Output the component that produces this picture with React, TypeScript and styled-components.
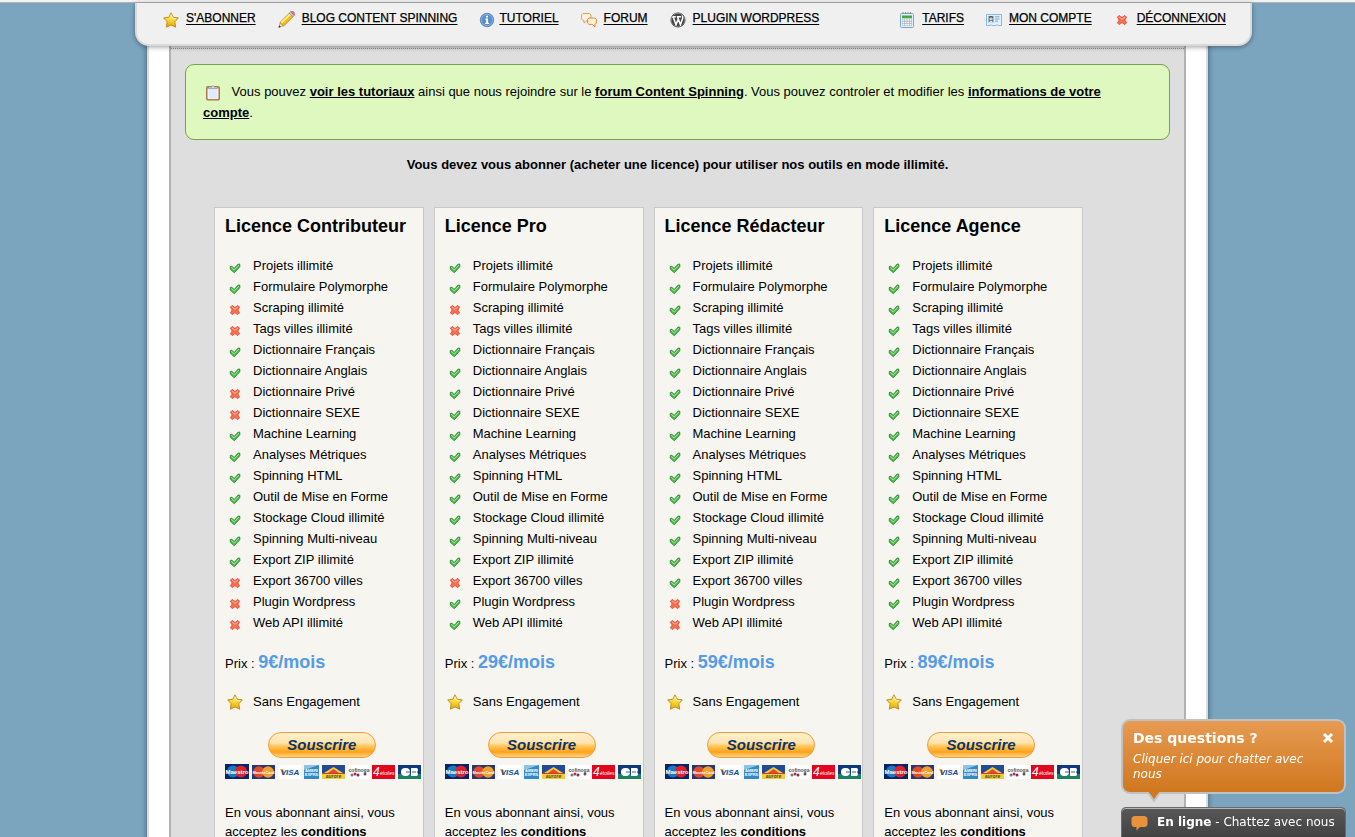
import React from "react";
import styled, { createGlobalStyle, css } from "styled-components";

const GlobalStyle = createGlobalStyle`
  *, *::before, *::after { box-sizing: border-box; }
  body {
    margin: 0;
    background: #7ba5bf;
    color: #000;
    font: 13px/21px "Liberation Sans", Arial, sans-serif;
  }
  p, h1, h2, ul { margin: 0; padding: 0; }
  a { color: inherit; }
`;

const Screen = styled.div`
  display: flex;
  flex-direction: column;
  height: 100vh;
  overflow: hidden;
`;

const TopStrip = styled.div`
  flex: none;
  height: 3px;
  background: #f2f2f2;
  border-bottom: 1px solid #b4b4b4;
`;

const Column = styled.div`
  display: flex;
  flex-direction: column;
  flex: 1;
  width: 100%;
  max-width: 1061px;
  margin: 0 auto;
`;

const Header = styled.header`
  position: relative;
  z-index: 1;
  flex: none;
  display: flex;
  justify-content: space-between;
  height: 43px;
  margin: 0 -44px 0 -12px;
  padding: 6px 24px 0 26px;
  background: #f0f0f0;
  border: 2px solid #dadada;
  border-top: 0;
  border-radius: 0 0 14px 14px;
  box-shadow: 0 1px 5px rgba(0, 0, 0, 0.4);
`;

const Nav = styled.nav`
  display: flex;
  align-items: flex-start;
  gap: 22px;
`;

const NavLink = styled.a<{ $tight?: boolean }>`
  display: flex;
  align-items: center;
  gap: ${(p) => (p.$tight ? "4px" : "7px")};
  height: 21px;
  font-size: 12px;
  text-decoration: none;
  white-space: nowrap;
  span {
    margin-bottom: 2px;
    text-decoration: underline;
    text-underline-offset: 2px;
    -webkit-text-stroke: 0.25px #000;
  }
`;

const Sheet = styled.div`
  display: flex;
  flex: 1;
  min-height: 0;
  margin-top: -14px;
  padding: 0 20px;
  background: #fff;
  border: solid #d9dcde;
  border-width: 0 2px;
  box-shadow: 0 0 6px rgba(0, 0, 0, 0.45);
`;

const Content = styled.main`
  flex: 1;
  min-width: 0;
  padding-top: 16px;
  background: #dedede;
  border: solid #b2b2b2;
  border-width: 0 2px;
`;

const Divider = styled.div`
  border-top: 1px dotted #8c8c8c;
`;

const Notice = styled.p`
  margin: 15px 14px 0;
  padding: 16px 40px 16px 17px;
  background: #dff8c0;
  border: 1px solid #76a34c;
  border-radius: 9px;
  svg { margin: 0 7px 0 2px; vertical-align: -5px; }
  a { font-weight: bold; }
`;

const Lead = styled.h1`
  margin: 14px 0 32px;
  font-size: 13px;
  line-height: 21px;
  text-align: center;
`;

const Plans = styled.div`
  display: grid;
  grid-template-columns: repeat(4, minmax(0, 1fr));
  gap: 10px;
  padding: 0 101px 0 43px;
`;

const Card = styled.section`
  padding: 8px 4px 40px 10px;
  background: #f6f5f0;
  border: 1px solid #c8c8c8;
`;

const CardTitle = styled.h2`
  margin-bottom: 18px;
  font-size: 18px;
  line-height: 21px;
  white-space: nowrap;
`;

const Features = styled.ul`
  list-style: none;
`;

const rowStyle = css`
  display: flex;
  align-items: center;
  gap: 10px;
  height: 21px;
  padding-left: 2px;
  white-space: nowrap;
`;

const Feature = styled.li`
  ${rowStyle}
  svg { margin-top: 5px; }
`;

const Perk = styled.p`
  ${rowStyle}
  margin: 18px 0 20px;
`;

const Price = styled.p`
  margin-top: 19px;
  height: 21px;
  strong { color: #559be6; font-size: 18px; }
`;

const Subscribe = styled.button`
  display: block;
  width: 108px;
  height: 26px;
  margin: 0 auto 6px;
  padding: 0;
  color: #0b3565;
  font: italic bold 15px/22px "Liberation Sans", Arial, sans-serif;
  background: linear-gradient(#fff0d0 0%, #ffe4ac 42%, #ffcb68 52%, #ffac2b 72%, #ffa31c 80%, #ffd88e 100%);
  border: 1px solid #fa9a35;
  border-radius: 13px;
`;

const Logos = styled.svg`
  display: block;
  font-family: "Liberation Sans", Arial, sans-serif;
  font-weight: bold;
`;

const Terms = styled.p`
  margin-top: 24px;
  padding-right: 6px;
  line-height: 19px;
`;

const Chat = styled.aside`
  position: fixed;
  right: 9px;
  bottom: 0;
  width: 225px;
  color: #fff;
  font: 12px/15px "DejaVu Sans", Verdana, sans-serif;
`;

const Bubble = styled.div`
  position: relative;
  height: 75px;
  margin-bottom: 13px;
  padding: 9px 10px;
  background: linear-gradient(#e79b52, #d0771f);
  border: 2px solid #bfc1c3;
  border-radius: 9px;
`;

const BubbleTail = styled.svg`
  position: absolute;
  left: 24px;
  top: 71px;
`;

const BubbleTop = styled.div`
  display: flex;
  justify-content: space-between;
  align-items: center;
  margin-bottom: 6px;
  font-size: 14px;
  line-height: 16px;
`;

const Close = styled.button`
  display: flex;
  padding: 0;
  background: none;
  border: 0;
`;

const ChatBar = styled.button`
  display: flex;
  align-items: center;
  gap: 9px;
  width: 100%;
  height: 30px;
  padding: 0 9px;
  color: #fff;
  font: inherit;
  white-space: nowrap;
  background: linear-gradient(#585858, #424242);
  border: 1px solid #6b6b6b;
  border-bottom: 0;
  border-radius: 5px 5px 0 0;
  box-shadow: inset 0 1px 0 #b5b5b5;
`;

const StarIcon = () => (
  <svg width="16" height="16" viewBox="0 0 16 16" aria-hidden="true">
    <defs>
      <linearGradient id="star" x1="0" y1="0" x2="0" y2="1">
        <stop offset="0" stopColor="#fff6a8" />
        <stop offset="0.45" stopColor="#fbd93c" />
        <stop offset="1" stopColor="#e0a808" />
      </linearGradient>
    </defs>
    <path d="M8 .8 10.2 5.3 15.3 5.9 11.8 9.7 12.7 15.2 8 12.9 3.3 15.2 4.2 9.7.7 5.9 5.8 5.3Z" fill="url(#star)" stroke="#c08c1c" strokeWidth="1" strokeLinejoin="round" />
    <path d="M8 2.6 9.6 6.2 13 6.7" fill="none" stroke="#fffbd0" strokeWidth=".8" />
  </svg>
);

const PencilIcon = () => (
  <svg width="17" height="17" viewBox="0 0 16 16" aria-hidden="true">
    <path d="M.8 15.3 2 11 5 14Z" fill="#f6d9b8" stroke="#b78c61" strokeWidth=".6" />
    <path d="M.5 15.7 1.2 13.5 2.7 15Z" fill="#333" />
    <path d="M1.8 10.8 10.8 1.9 14.2 5.3 5.3 14.2Z" fill="#f3b91c" stroke="#b67b16" strokeWidth=".7" />
    <path d="M3.2 11 11.9 2.8" stroke="#fff08c" strokeWidth="1.8" />
    <path d="M10.5 2.1 12 .7 15.4 4.1 13.9 5.5Z" fill="#b9c4cc" stroke="#788792" strokeWidth=".5" />
    <path d="M12 .7Q13.7-.2 15 1 16.2 2.4 15.4 4.1Z" fill="#ef7a72" stroke="#c14c46" strokeWidth=".5" />
  </svg>
);

const InfoIcon = () => (
  <svg width="16" height="16" viewBox="0 0 16 16" aria-hidden="true">
    <circle cx="8" cy="8" r="6.7" fill="#5b8fcb" stroke="#4a78b2" strokeWidth=".8" />
    <circle cx="8" cy="8" r="5.7" fill="none" stroke="#8fb5df" strokeWidth=".9" />
    <path d="M7 3.7H9V5.4H7ZM6.3 6.6H9V10.8H10V12H6.2V10.8H7.2V7.8H6.3Z" fill="#fff" />
  </svg>
);

const ForumIcon = () => (
  <svg width="16" height="16" viewBox="0 0 16 16" aria-hidden="true">
    <path d="M2 1.500H8.500L10 3V7L8.500 8.500H6L3 11V8.500H2L.6 7V3Z" fill="#fff3df" stroke="#e59a62" strokeLinejoin="round" />
    <path d="M8 6H14L15.400 7.400V11L14 12.400V15L11.200 12.400H8L6.600 11V7.400Z" fill="#fff2c6" stroke="#d8894e" strokeLinejoin="round" />
  </svg>
);

const WordpressIcon = () => (
  <svg width="16" height="16" viewBox="0 0 16 16" aria-hidden="true">
    <circle cx="8" cy="8" r="8" fill="#fff" />
    <circle cx="8" cy="8" r="6.6" fill="#464646" />
    <path d="M2 4.800H5.800M6.800 4.800H11M3.200 5 6 12.800 8.200 7M7.600 5 10.400 12.800 12.700 6.300Q13 4.700 12 3.400" fill="none" stroke="#fff" strokeWidth="1.500" />
    <circle cx="8" cy="8" r="7.100" fill="none" stroke="#464646" strokeWidth=".9" />
  </svg>
);

const CalendarIcon = () => (
  <svg width="16" height="16" viewBox="0 0 16 16" aria-hidden="true">
    <rect x="1.500" y="1.500" width="13" height="14" rx="1" fill="#e4f0fa" stroke="#7ba5cb" />
    <path d="M4 0V2M6.500 0V2M9 0V2M11.500 0V2" stroke="#8a8a8a" />
    <rect x="3" y="3.500" width="10" height="2.800" fill="#48a83e" />
    <rect x="3" y="7" width="10" height="7" fill="#a3b5c2" />
    <path d="M3.500 8H12.500M3.500 10.400H12.500M3.500 12.800H12.500" stroke="#fff" strokeWidth="1.500" strokeDasharray="1.700 .7" />
  </svg>
);

const AccountIcon = () => (
  <svg width="16" height="16" viewBox="0 0 16 16" aria-hidden="true">
    <path d="M.5 2.500H15.500V13.500H12L11 12.600 10 13.500H6L5 12.600 4 13.500H.5Z" fill="#e3f0fc" stroke="#8db8e4" />
    <rect x="2.500" y="4" width="5" height="6.500" fill="#4c83bd" />
    <circle cx="5" cy="6.600" r="1.700" fill="#f7c9a0" />
    <path d="M3.200 5.800Q5 3.400 6.800 5.800" fill="none" stroke="#573916" />
    <path d="M3 10.400Q5 7.500 7 10.400Z" fill="#fff" />
    <path d="M9 4.800H13.500M9 7H13.500M9 9.200H12" stroke="#76a5d4" />
  </svg>
);

const CrossIcon = () => (
  <svg width="16" height="16" viewBox="0 0 16 16" aria-hidden="true">
    <path d="M5.200 3.400 8 5.500 10.800 3.400 12.600 5.200 10.800 8 12.600 10.800 10.800 12.600 8 10.600 5.200 12.600 3.400 10.800 5.200 8 3.400 5.200Z" fill="#f66f50" stroke="#d9442c" strokeWidth=".8" strokeLinejoin="round" />
    <path d="M5 5 8 7.300 11 5" fill="none" stroke="#ffb09a" strokeWidth="1" />
  </svg>
);

const CheckIcon = () => (
  <svg width="16" height="16" viewBox="0 0 16 16" aria-hidden="true">
    <path d="M3.300 6.500 4.900 6.200 7.200 8.500 11.200 4 12.800 4.200V6.800L7.300 12.700 3.300 9.200Z" fill="#4fc04a" stroke="#2b8033" strokeWidth=".9" strokeLinejoin="round" />
    <path d="M4.200 7.200 7.200 10 12 5" fill="none" stroke="#9be595" strokeWidth="1" />
  </svg>
);

const ClipboardIcon = () => (
  <svg width="16" height="16" viewBox="0 0 16 16" aria-hidden="true">
    <rect x="1.500" y="1.500" width="13" height="13.500" rx="1" fill="#b98657" stroke="#a67a52" />
    <path d="M3 3.500H13V13.500H3Z" fill="#dfebfb" stroke="#fff" strokeWidth=".8" />
    <path d="M3.500 3.500V2H6.400Q8-.7 9.600 2H12.500V3.500Z" fill="#d9d9d9" stroke="#8d8d8d" strokeWidth=".7" />
  </svg>
);

const PaymentLogos = () => (
  <Logos width="197" height="15" viewBox="0 0 197 15" role="img" aria-label="Moyens de paiement">
    <rect width="24" height="15" fill="#0a2367" />
    <circle cx="8" cy="7.500" r="6" fill="#1879bf" />
    <circle cx="16" cy="7.500" r="6" fill="#d9222b" />
    <text x="12" y="9.500" fontSize="6" fill="#fff" textAnchor="middle">Maestro</text>
    <rect x="27" y="1" width="23" height="14" fill="#29366f" />
    <circle cx="34" cy="8" r="5.800" fill="#e04a2c" />
    <circle cx="43" cy="8" r="5.800" fill="#efa02f" />
    <text x="38.500" y="10" fontSize="4" fill="#fff" textAnchor="middle">MasterCard</text>
    <rect x="53" y="1" width="23" height="14" fill="#fff" />
    <path d="M55 5H58L60 11H58Z" fill="#e8a33c" />
    <text x="65" y="11" fontSize="8" fontStyle="italic" fill="#174a91" textAnchor="middle">VISA</text>
    <rect x="79" y="1" width="15" height="14" fill="#3289c8" />
    <path d="M79 1H94L79 6Z" fill="#8cc4e8" />
    <text x="86.500" y="7.500" fontSize="4" fill="#fff" textAnchor="middle">AMERI</text>
    <text x="86.500" y="11.500" fontSize="4" fill="#fff" textAnchor="middle">EXPRS</text>
    <rect x="97" y="1" width="23" height="14" fill="#f4cd36" />
    <rect x="97" y="1" width="23" height="8" fill="#244a96" />
    <path d="M99 9 108.500 3 118 9Z" fill="#f4cd36" />
    <path d="M103 9 108.500 5 114 9Z" fill="#e14a32" />
    <path d="M97 9.500H120" stroke="#cf3c33" />
    <text x="108.500" y="13.500" fontSize="5" fontStyle="italic" fill="#54482a" textAnchor="middle">aurore</text>
    <rect x="123" y="1" width="22" height="14" fill="#fff" />
    <text x="134" y="7.500" fontSize="5" fill="#555" textAnchor="middle">cofinoga</text>
    <circle cx="127" cy="11" r="1.500" fill="#777" />
    <circle cx="130" cy="10" r="1.500" fill="#b32b52" />
    <circle cx="133" cy="11" r="1.500" fill="#94284b" />
    <circle cx="140" cy="10" r="1.500" fill="#555" />
    <rect x="147" y="1" width="23" height="14" fill="#e1051e" />
    <text x="148" y="12" fontSize="12" fontStyle="italic" fontWeight="normal" fill="#fff">4</text>
    <text x="155" y="11" fontSize="5" fontStyle="italic" fontWeight="normal" fill="#fff">étoiles</text>
    <rect x="173" y="1" width="23" height="14" fill="#10387f" />
    <path d="M173 10H196V15H173Z" fill="#1d7f62" />
    <rect x="176" y="4" width="9" height="8" rx="4" fill="#fff" />
    <path d="M186 4H192Q194 6 192 8 194 10 192 12H186Z" fill="#fff" />
    <path d="M181 8H185M187 8H191" stroke="#29668c" />
  </Logos>
);

const featureNames = [
  "Projets illimité", "Formulaire Polymorphe", "Scraping illimité", "Tags villes illimité",
  "Dictionnaire Français", "Dictionnaire Anglais", "Dictionnaire Privé", "Dictionnaire SEXE",
  "Machine Learning", "Analyses Métriques", "Spinning HTML", "Outil de Mise en Forme",
  "Stockage Cloud illimité", "Spinning Multi-niveau", "Export ZIP illimité",
  "Export 36700 villes", "Plugin Wordpress", "Web API illimité",
];

const plans = [
  { name: "Contributeur", price: 9, missing: [2, 3, 6, 7, 15, 16, 17] },
  { name: "Pro", price: 29, missing: [2, 3, 15] },
  { name: "Rédacteur", price: 59, missing: [16, 17] },
  { name: "Agence", price: 89, missing: [] as number[] },
];

type LinkItem = { label: string; Icon: () => React.JSX.Element; tight?: boolean };

const mainLinks: LinkItem[] = [
  { label: "S'ABONNER", Icon: StarIcon },
  { label: "BLOG CONTENT SPINNING", Icon: PencilIcon },
  { label: "TUTORIEL", Icon: InfoIcon, tight: true },
  { label: "FORUM", Icon: ForumIcon },
  { label: "PLUGIN WORDPRESS", Icon: WordpressIcon },
];

const accountLinks: LinkItem[] = [
  { label: "TARIFS", Icon: CalendarIcon },
  { label: "MON COMPTE", Icon: AccountIcon },
  { label: "DÉCONNEXION", Icon: CrossIcon },
];

const NavLinks = ({ items, label }: { items: LinkItem[]; label: string }) => (
  <Nav aria-label={label}>
    {items.map(({ label: text, Icon, tight }) => (
      <NavLink key={text} href="#" $tight={tight}>
        <Icon />
        <span>{text}</span>
      </NavLink>
    ))}
  </Nav>
);

export default function App() {
  return (
    <Screen>
      <GlobalStyle />
      <TopStrip />
      <Column>
        <Header>
          <NavLinks items={mainLinks} label="Navigation" />
          <NavLinks items={accountLinks} label="Compte" />
        </Header>
        <Sheet>
          <Content>
            <Divider />
            <Notice>
              <ClipboardIcon /> Vous pouvez <a href="#">voir les tutoriaux</a> ainsi que nous rejoindre sur le{" "}
              <a href="#">forum Content Spinning</a>. Vous pouvez controler et modifier les{" "}
              <a href="#">informations de votre compte</a>.
            </Notice>
            <Lead>Vous devez vous abonner (acheter une licence) pour utiliser nos outils en mode illimité.</Lead>
            <Plans>
              {plans.map((plan) => (
                <Card key={plan.name}>
                  <CardTitle>Licence {plan.name}</CardTitle>
                  <Features>
                    {featureNames.map((name, i) => (
                      <Feature key={name}>
                        {plan.missing.includes(i) ? <CrossIcon /> : <CheckIcon />}
                        {name}
                      </Feature>
                    ))}
                  </Features>
                  <Price>
                    Prix : <strong>{plan.price}€/mois</strong>
                  </Price>
                  <Perk>
                    <StarIcon />
                    Sans Engagement
                  </Perk>
                  <Subscribe type="button">Souscrire</Subscribe>
                  <PaymentLogos />
                  <Terms>
                    En vous abonnant ainsi, vous acceptez les <strong>conditions</strong>
                  </Terms>
                </Card>
              ))}
            </Plans>
          </Content>
        </Sheet>
      </Column>
      <Chat>
        <Bubble>
          <BubbleTop>
            <strong>Des questions ?</strong>
            <Close type="button" aria-label="Fermer">
              <svg width="12" height="12" viewBox="0 0 12 12">
                <path d="M2 2 10 10M10 2 2 10" stroke="#fff" strokeWidth="3" />
              </svg>
            </Close>
          </BubbleTop>
          <em>Cliquer ici pour chatter avec nous</em>
          <BubbleTail width="14" height="11" viewBox="0 0 14 11" aria-hidden="true">
            <path d="M1 0 7 9 13 0" fill="#d0771f" stroke="#bfc1c3" strokeWidth="2" />
            <path d="M2 0H12L11 2H3Z" fill="#d0771f" />
          </BubbleTail>
        </Bubble>
        <ChatBar type="button">
          <svg width="17" height="16" viewBox="0 0 17 16" aria-hidden="true">
            <path d="M4 1H13Q16.500 1 16.500 4.500V8.500Q16.500 12 13 12H9L5.500 15.500V12H4Q.5 12 .5 8.500V4.500Q.5 1 4 1Z" fill="#e8923c" />
          </svg>
          <span>
            <strong>En ligne</strong> - Chattez avec nous
          </span>
        </ChatBar>
      </Chat>
    </Screen>
  );
}
